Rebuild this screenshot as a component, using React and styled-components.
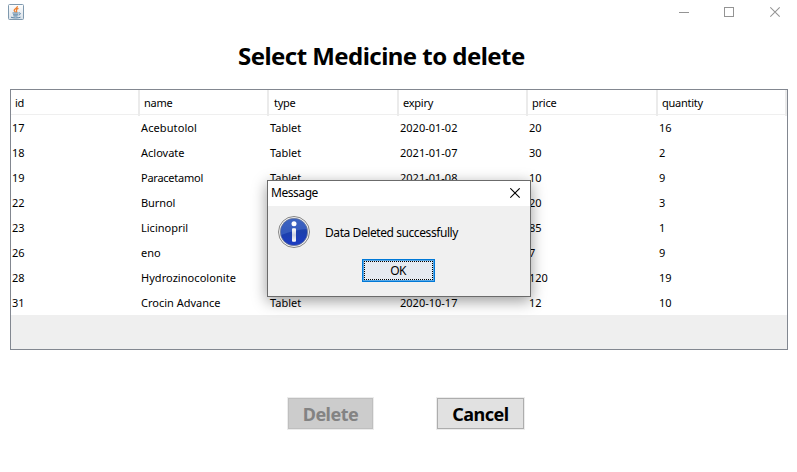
import React from "react";
import styled, { createGlobalStyle } from "styled-components";

const GlobalStyle = createGlobalStyle`
  * { box-sizing: border-box; }
  html, body { margin: 0; padding: 0; background: #fff; overflow: hidden; }
`;

const Frame = styled.div`
  position: relative;
  display: flex;
  flex-direction: column;
  width: 797px;
  height: 472px;
  background: #fff;
  color: #000;
  font-family: "Noto Sans", "Open Sans", sans-serif;
`;

const TitleBar = styled.header`
  display: flex;
  justify-content: space-between;
  height: 25px;
  padding: 4px 16px 0 8px;
`;

const WindowControls = styled.div`
  display: grid;
  grid-template-columns: 45px 46px 11px;
  padding-top: 2px;
`;

const Heading = styled.h1`
  margin: 13px 0 0 238px;
  height: 36px;
  font-size: 24px;
  line-height: 36px;
  font-weight: 700;
  letter-spacing: -0.55px;
  white-space: nowrap;
`;

const TablePane = styled.section`
  width: 778px;
  height: 261px;
  margin: 15px 0 0 10px;
  border: 1px solid #828790;
  background: #efefef;
`;

const HeaderRow = styled.div`
  display: grid;
  grid-template-columns: 129px 129px 130px 129px 130px 129px;
  height: 25px;
  background: #fff;
  border-bottom: 1px solid #efefef;
`;

const HeaderCell = styled.div`
  padding-left: ${(p) => p.$indent}px;
  border-right: 2px solid #ebebeb;
  font-size: 11px;
  line-height: 26px;
  letter-spacing: -0.25px;
  white-space: nowrap;
`;

const Row = styled.div`
  display: grid;
  grid-template-columns: 129px 129px 130px 129px 130px 129px;
  height: 25px;
  background: #fff;
`;

const Cell = styled.div`
  padding-left: 1px;
  font-size: 11px;
  line-height: 26px;
  letter-spacing: ${(p) => p.$spacing || 0}px;
  white-space: nowrap;
`;

const Actions = styled.div`
  display: flex;
  gap: 62px;
  margin: 47px 0 0 287px;
`;

const ActionButton = styled.button`
  width: ${(p) => p.$width}px;
  height: 33px;
  padding: 1px 0 0;
  border: 1px solid #ececec;
  outline: 1px solid ${(p) => (p.disabled ? "#bfbfbf" : "#adadad")};
  outline-offset: -2px;
  background: ${(p) => (p.disabled ? "#cccccc" : "#e1e1e1")};
  color: ${(p) => (p.disabled ? "#838383" : "#000")};
  font: 700 18px/30px "Noto Sans", "Open Sans", sans-serif;
  letter-spacing: -0.5px;
`;

const Dialog = styled.div`
  position: absolute;
  left: 267px;
  top: 180px;
  width: 264px;
  height: 117px;
  border: 1px solid #6b6b6b;
  background: #f0f0f0;
  box-shadow: 0 4px 14px rgba(0, 0, 0, 0.4);
`;

const DialogTitle = styled.div`
  display: flex;
  justify-content: space-between;
  height: 25px;
  padding: 0 9px 0 3px;
  background: #fff;
  font-size: 12px;
  line-height: 24px;
  letter-spacing: -0.45px;
  svg { margin-top: 7px; }
`;

const DialogBody = styled.div`
  display: flex;
  align-items: center;
  gap: 14px;
  height: 53px;
  padding-left: 9px;
  font-size: 12px;
  line-height: 16px;
  letter-spacing: -0.42px;
  white-space: nowrap;
  svg { margin-bottom: 2px; }
`;

const OkButton = styled.button`
  display: block;
  width: 73px;
  height: 23px;
  margin: 0 0 0 94px;
  padding: 0 1px 0 0;
  border: 1px solid #0078d7;
  box-shadow: inset 0 0 0 1px #5aa9e6;
  outline: 1px dotted #000;
  outline-offset: -3px;
  background: #e5eaf1;
  color: #000;
  font: 12px/20px "Noto Sans", "Open Sans", sans-serif;
  letter-spacing: -0.7px;
`;

const JavaIcon = () => (
  <svg width="16" height="16" viewBox="0 0 16 16">
    <defs>
      <linearGradient id="tile" x1="0" y1="0" x2="0" y2="1">
        <stop offset="0" stopColor="#fff" />
        <stop offset="1" stopColor="#d8e0e8" />
      </linearGradient>
    </defs>
    <rect x=".5" y=".5" width="15" height="15" rx="1" fill="url(#tile)" stroke="#7f99ae" />
    <path d="M9.4 2.2C9.8 4 6 4.8 6.2 6.4c.1.8 1 1.2 1.2 2M10.5 4.3C8.5 5 8 5.7 8.6 6.7c.3.6 0 1.2-.5 1.6" fill="none" stroke="#ee8130" strokeWidth="1.3" />
    <path d="M4.5 9h6M5 10.8h5M5.5 12h4M10.8 9c2-.6 2.4 1.5-.3 2M3 13.2c2 1 7 1 9.5 0" fill="none" stroke="#5580a3" strokeWidth="1" />
  </svg>
);

const InfoIcon = () => (
  <svg width="34" height="34" viewBox="0 0 34 34">
    <defs>
      <linearGradient id="blue" x1="0" y1="0" x2="0" y2="1">
        <stop offset="0" stopColor="#2950b4" />
        <stop offset=".5" stopColor="#1c40ac" />
        <stop offset="1" stopColor="#1d3cc4" />
      </linearGradient>
      <linearGradient id="stem" x1="0" y1="0" x2="0" y2="1">
        <stop offset="0" stopColor="#fff" />
        <stop offset=".5" stopColor="#c9cfe0" />
        <stop offset="1" stopColor="#fff" />
      </linearGradient>
    </defs>
    <circle cx="17" cy="17" r="15.5" fill="#f6f6f6" stroke="#858585" />
    <circle cx="17" cy="17" r="13.7" fill="url(#blue)" stroke="#7c8494" strokeWidth=".7" />
    <path d="M4 20C3 10 9 4 17 4s13 5 13 10C24 14 12 17 4 20z" fill="#5f86d8" opacity=".38" />
    <circle cx="17" cy="8.7" r="2.5" fill="#fff" />
    <rect x="15" y="13.2" width="4" height="13.6" rx="1" fill="url(#stem)" />
  </svg>
);

const Minimize = () => (
  <svg width="11" height="11"><path d="M0 6.5h10" stroke="#949494" /></svg>
);
const Maximize = () => (
  <svg width="11" height="11"><rect x=".5" y="1.5" width="9" height="9" fill="none" stroke="#949494" /></svg>
);
const Close = ({ color = "#949494", size = 9.4, dy = 1 }) => (
  <svg width="11" height="12">
    <path d={`M.3 ${0.3 + dy}l${size} ${size}M${0.3 + size} ${0.3 + dy}l-${size} ${size}`} stroke={color} strokeWidth="1.1" />
  </svg>
);

const columns = [
  ["id", 4],
  ["name", 4],
  ["type", 5],
  ["expiry", 4],
  ["price", 4],
  ["quantity", 4],
];

const medicines = [
  ["17", "Acebutolol", "Tablet", "2020-01-02", "20", "16"],
  ["18", "Aclovate", "Tablet", "2021-01-07", "30", "2"],
  ["19", "Paracetamol", "Tablet", "2021-01-08", "10", "9"],
  ["22", "Burnol", "", "", "20", "3"],
  ["23", "Licinopril", "", "", "85", "1"],
  ["26", "eno", "", "", "7", "9"],
  ["28", "Hydrozinocolonite", "", "", "120", "19"],
  ["31", "Crocin Advance", "Tablet", "2020-10-17", "12", "10"],
];

const nameSpacing = { Acebutolol: 0.1, Paracetamol: -0.25, Burnol: -0.1, Hydrozinocolonite: 0.05 };

export default function App() {
  return (
    <>
      <GlobalStyle />
      <Frame>
        <TitleBar>
          <JavaIcon />
          <WindowControls>
            <Minimize />
            <Maximize />
            <Close />
          </WindowControls>
        </TitleBar>
        <Heading>Select Medicine to delete</Heading>
        <TablePane>
          <HeaderRow>
            {columns.map(([label, indent]) => (
              <HeaderCell key={label} $indent={indent}>{label}</HeaderCell>
            ))}
          </HeaderRow>
          {medicines.map((m) => (
            <Row key={m[0]}>
              {m.map((v, i) => <Cell key={i} $spacing={nameSpacing[v]}>{v}</Cell>)}
            </Row>
          ))}
        </TablePane>
        <Actions>
          <ActionButton $width={87} disabled>Delete</ActionButton>
          <ActionButton $width={89}>Cancel</ActionButton>
        </Actions>
        <Dialog role="dialog">
          <DialogTitle>
            Message
            <Close color="#000" dy={0} />
          </DialogTitle>
          <DialogBody>
            <InfoIcon />
            Data Deleted successfully
          </DialogBody>
          <OkButton>OK</OkButton>
        </Dialog>
      </Frame>
    </>
  );
}
